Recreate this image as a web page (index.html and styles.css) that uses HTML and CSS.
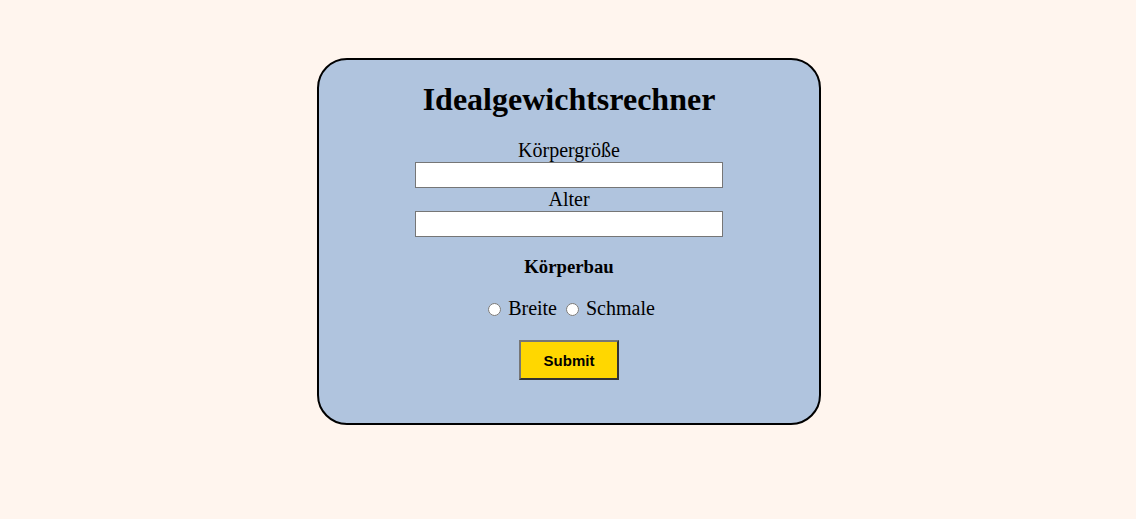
FILE: index.html
```html
<!DOCTYPE html>
<html lang="de">
<head>
<meta charset="utf-8">
<title>Idealgewichtsrechner</title>
<link rel="stylesheet" href="styles.css">
</head>
<body>
<form class="card">
  <h1 class="title">Idealgewichtsrechner</h1>
  <label class="field-label" for="groesse">Körpergröße</label>
  <input class="field" id="groesse" type="text">
  <label class="field-label" for="alter">Alter</label>
  <input class="field" id="alter" type="text">
  <h3 class="section">Körperbau</h3>
  <p class="radios">
    <input class="radio" type="radio" name="bau" id="breite"><label for="breite">Breite</label>
    <input class="radio" type="radio" name="bau" id="schmale"><label for="schmale">Schmale</label>
  </p>
  <button class="submit" type="button">Submit</button>
</form>
</body>
</html>
```
FILE: styles.css
```css
html, body {
  margin: 0;
  padding: 0;
  background: #fff5ee;
  font-family: "Liberation Serif", "Times New Roman", serif;
}
body {
  padding-top: 58px;
  padding-left: 2px;
  display: flex;
  justify-content: center;
}
.card {
  width: 500px;
  height: 363px;
  background: #b0c4de;
  border: 2px solid #000;
  border-radius: 30px;
  display: flex;
  flex-direction: column;
  align-items: center;
}
.title {
  font-size: 32px;
  font-weight: bold;
  margin: 21px 0 21px;
  line-height: 37px;
}
.field-label {
  font-size: 20px;
  line-height: 23px;
  display: block;
}
.field {
  width: 308px;
  height: 26px;
  box-sizing: border-box;
  border: 1px solid #767676;
  background: #fff;
  margin: 0;
  padding: 1px 2px;
}
.section {
  font-size: 18.72px;
  font-weight: bold;
  margin: 19px 0 0;
  line-height: 21px;
}
.radios {
  font-size: 20px;
  line-height: 23px;
  margin: 20px 0 0 4px;
  display: flex;
  align-items: center;
}
.radio {
  width: 13px;
  height: 13px;
  margin: 1px 7px 0 5px;
}
.radio + label {
  margin-right: 4px;
}
.submit {
  margin-top: 20px;
  width: 100px;
  height: 40px;
  background: #ffd700;
  border: 2px solid;
  border-color: #767676 #333 #333 #767676;
  font-family: "Liberation Sans", Arial, sans-serif;
  font-weight: bold;
  font-size: 15px;
  color: #000;
}
```
